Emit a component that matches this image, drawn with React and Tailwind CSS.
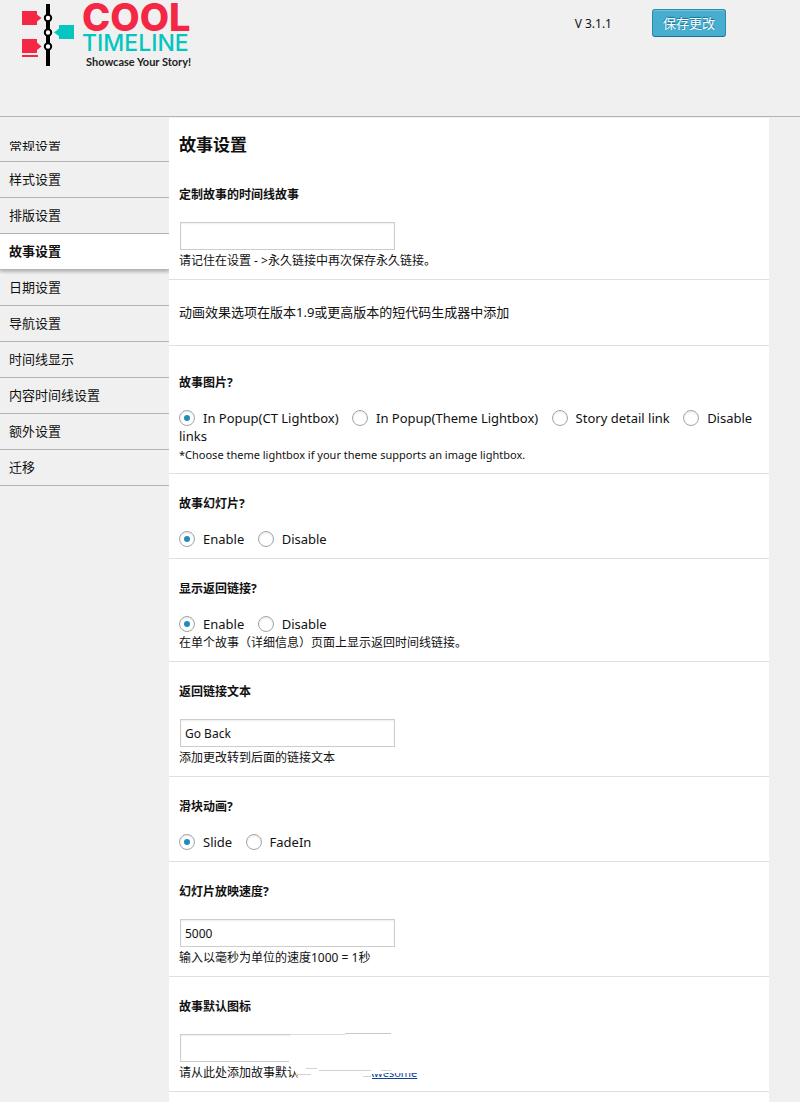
import React from "react";

const menu = [
  "常规设置",
  "样式设置",
  "排版设置",
  "故事设置",
  "日期设置",
  "导航设置",
  "时间线显示",
  "内容时间线设置",
  "额外设置",
  "迁移",
];

function Logo() {
  return (
    <div className="flex items-start gap-[7px]">
      <svg width="54" height="66" viewBox="0 0 54 66" role="img" aria-label="Cool Timeline">
        <path d="M1 11h15v3.500l4.500 3.500l-4.500 3.500v3.500h-15z" fill="#f42744" />
        <path d="M1 39h15v3.500l4.500 4l-4.500 3.500v3h-15z" fill="#f42744" />
        <path d="M1 55h16v2h-16z" fill="#f42744" />
        <path d="M53 25h-15v3.500l-5 4l5 3.500v3h15z" fill="#04c6bf" />
        <path d="M25 4h4v62h-4z" fill="#000" />
        <circle cx="27" cy="18" r="3.200" fill="#fff" stroke="#000" strokeWidth="2" />
        <circle cx="27" cy="32.500" r="3.200" fill="#fff" stroke="#000" strokeWidth="2" />
        <circle cx="27" cy="46.500" r="3.200" fill="#fff" stroke="#000" strokeWidth="2" />
      </svg>
      <div className="flex flex-col font-['Inter',sans-serif]">
        <span className="text-[38px] leading-[34px] font-extrabold text-[#f42744]">COOL</span>
        <span className="text-[23px] leading-[18px] font-medium text-[#04c6bf]">TIMELINE</span>
        <span className="pl-1 font-['Lato',sans-serif] text-[11px] leading-[20px] font-bold text-[#222]">
          Showcase Your Story!
        </span>
      </div>
    </div>
  );
}

function Label({ children, htmlFor }) {
  return (
    <label htmlFor={htmlFor} className="mb-4 block text-[12px] leading-5 font-bold">
      {children}
    </label>
  );
}

function Note({ children }) {
  return <p className="text-[12px] leading-5">{children}</p>;
}

function TextField({ id, label, value = "", children }) {
  return (
    <section className="border-b border-[#dfdfdf] px-[10px] pt-5 pb-2">
      <Label htmlFor={id}>{label}</Label>
      <div className="p-px">
        <input
          id={id}
          type="text"
          defaultValue={value}
          className="block h-7 w-[215px] border border-[#cdcdcd] bg-white px-1 text-[12px] shadow-[inset_0_1px_2px_rgba(0,0,0,0.07)]"
        />
      </div>
      {children}
    </section>
  );
}

function RadioField({ name, label, options, tall, children }) {
  return (
    <section
      className={`border-b border-[#dfdfdf] px-[10px] ${tall ? "pt-[27px]" : "pt-5"} ${children ? "pb-2" : "pb-[10px]"}`}
    >
      <fieldset>
        <legend className="mb-4 block text-[12px] leading-5 font-bold">{label}</legend>
        <div className="text-[13px] leading-[18px]">
          {options.map((option, i) => (
            <React.Fragment key={option}>
              <label className="mr-[10px]">
                <input
                  type="radio"
                  name={name}
                  defaultChecked={i === 0}
                  className="mt-px mr-2 inline-grid size-4 appearance-none place-content-center rounded-full border border-[#a0a5aa] bg-white align-top shadow-[inset_0_1px_2px_rgba(0,0,0,0.1)] before:size-[6px] before:rounded-full checked:before:bg-[#1e8cbe]"
                />
                {option}
              </label>{" "}
            </React.Fragment>
          ))}
        </div>
      </fieldset>
      {children}
    </section>
  );
}

export default function App() {
  return (
    <div className="min-h-screen bg-[#f0f0f0] font-['Noto_Sans','Noto_Sans_CJK_SC',sans-serif] text-[13px] text-[#111]">
      <header className="flex h-[117px] items-start justify-between border-b border-[#b5b5b5] pr-[74px] pl-[21px]">
        <Logo />
        <div className="flex items-center gap-10 pt-[9px]">
          <span className="pt-px text-[12px]">V 3.1.1</span>
          <button
            type="button"
            className="h-7 rounded-[3px] border border-[#2a8bab] border-b-[#1b7390] bg-[#48aecf] px-[10px] text-[13px] leading-none text-white shadow-[inset_0_1px_0_rgba(255,255,255,0.25)] [text-shadow:0_-1px_1px_#0d6f91]"
          >
            保存更改
          </button>
        </div>
      </header>

      <div className="grid grid-cols-[169px_minmax(0,1fr)_31px] pt-px">
        <nav className="overflow-hidden pt-2">
          {menu.map((item, i) => {
            if (i === 0)
              return (
                <a key={item} href="#" className="block border-b border-[#b5b5b5] px-[9px] pt-[15px] pb-[10px]">
                  <span className="flex h-[10px] items-center overflow-hidden leading-5">{item}</span>
                </a>
              );
            return (
              <a
                key={item}
                href="#"
                className={
                  item === "故事设置"
                    ? "relative block h-9 border-b border-[#b5b5b5] bg-white px-[9px] leading-[35px] font-bold shadow-[0_2px_3px_rgba(0,0,0,0.25)]"
                    : "block h-9 border-b border-[#b5b5b5] px-[9px] leading-[35px]"
                }
              >
                {item}
              </a>
            );
          })}
        </nav>

        <main className="min-h-[984px] bg-white">
          <h1 className="h-[47px] px-[10px] pt-[15px] text-[17px] leading-6 font-bold">故事设置</h1>
          <TextField id="slug" label="定制故事的时间线故事">
            <Note>请记住在设置 - &gt;永久链接中再次保存永久链接。</Note>
          </TextField>
          <section className="border-b border-[#dfdfdf] px-[10px] py-6 leading-[17px]">
            动画效果选项在版本1.9或更高版本的短代码生成器中添加
          </section>
          <RadioField
            name="images"
            label="故事图片?"
            tall
            options={["In Popup(CT Lightbox)", "In Popup(Theme Lightbox)", "Story detail link", "Disable links"]}
          >
            <p className="text-[11px] leading-5">*Choose theme lightbox if your theme supports an image lightbox.</p>
          </RadioField>
          <RadioField name="slideshow" label="故事幻灯片?" options={["Enable", "Disable"]} />
          <RadioField name="backlink" label="显示返回链接?" options={["Enable", "Disable"]}>
            <Note>在单个故事（详细信息）页面上显示返回时间线链接。</Note>
          </RadioField>
          <TextField id="backtext" label="返回链接文本" value="Go Back">
            <Note>添加更改转到后面的链接文本</Note>
          </TextField>
          <RadioField name="animation" label="滑块动画?" options={["Slide", "FadeIn"]} />
          <TextField id="speed" label="幻灯片放映速度?" value="5000">
            <Note>输入以毫秒为单位的速度1000 = 1秒</Note>
          </TextField>
          <TextField id="icon" label="故事默认图标">
            <div className="relative">
              <p className="flex gap-[68px] text-[12px] leading-5">
                请从此处添加故事默认
                <a href="#" className="text-[11px] leading-5 text-[#0b4296] underline">Awesome</a>
              </p>
              <svg
                className="pointer-events-none absolute -top-[31px] left-[108px]"
                width="134"
                height="48"
                viewBox="0 0 134 48"
                aria-hidden="true"
              >
                <path d="M4 0H134V41H100L96 42H85V48H12L7 38L2 30Z" fill="#fff" />
                <path d="M4 2.500H58" stroke="#dcdce2" />
                <path d="M58 1.500H104" stroke="#c8c8c8" />
                <path d="M10 42.500H24M19 36.500H30M32 38.500H84M76 44.500H84M94 38.500H104" stroke="#d2d2d2" />
                <path d="M9 43.500h2" stroke="#ff9f30" />
              </svg>
            </div>
          </TextField>
        </main>
      </div>
    </div>
  );
}
